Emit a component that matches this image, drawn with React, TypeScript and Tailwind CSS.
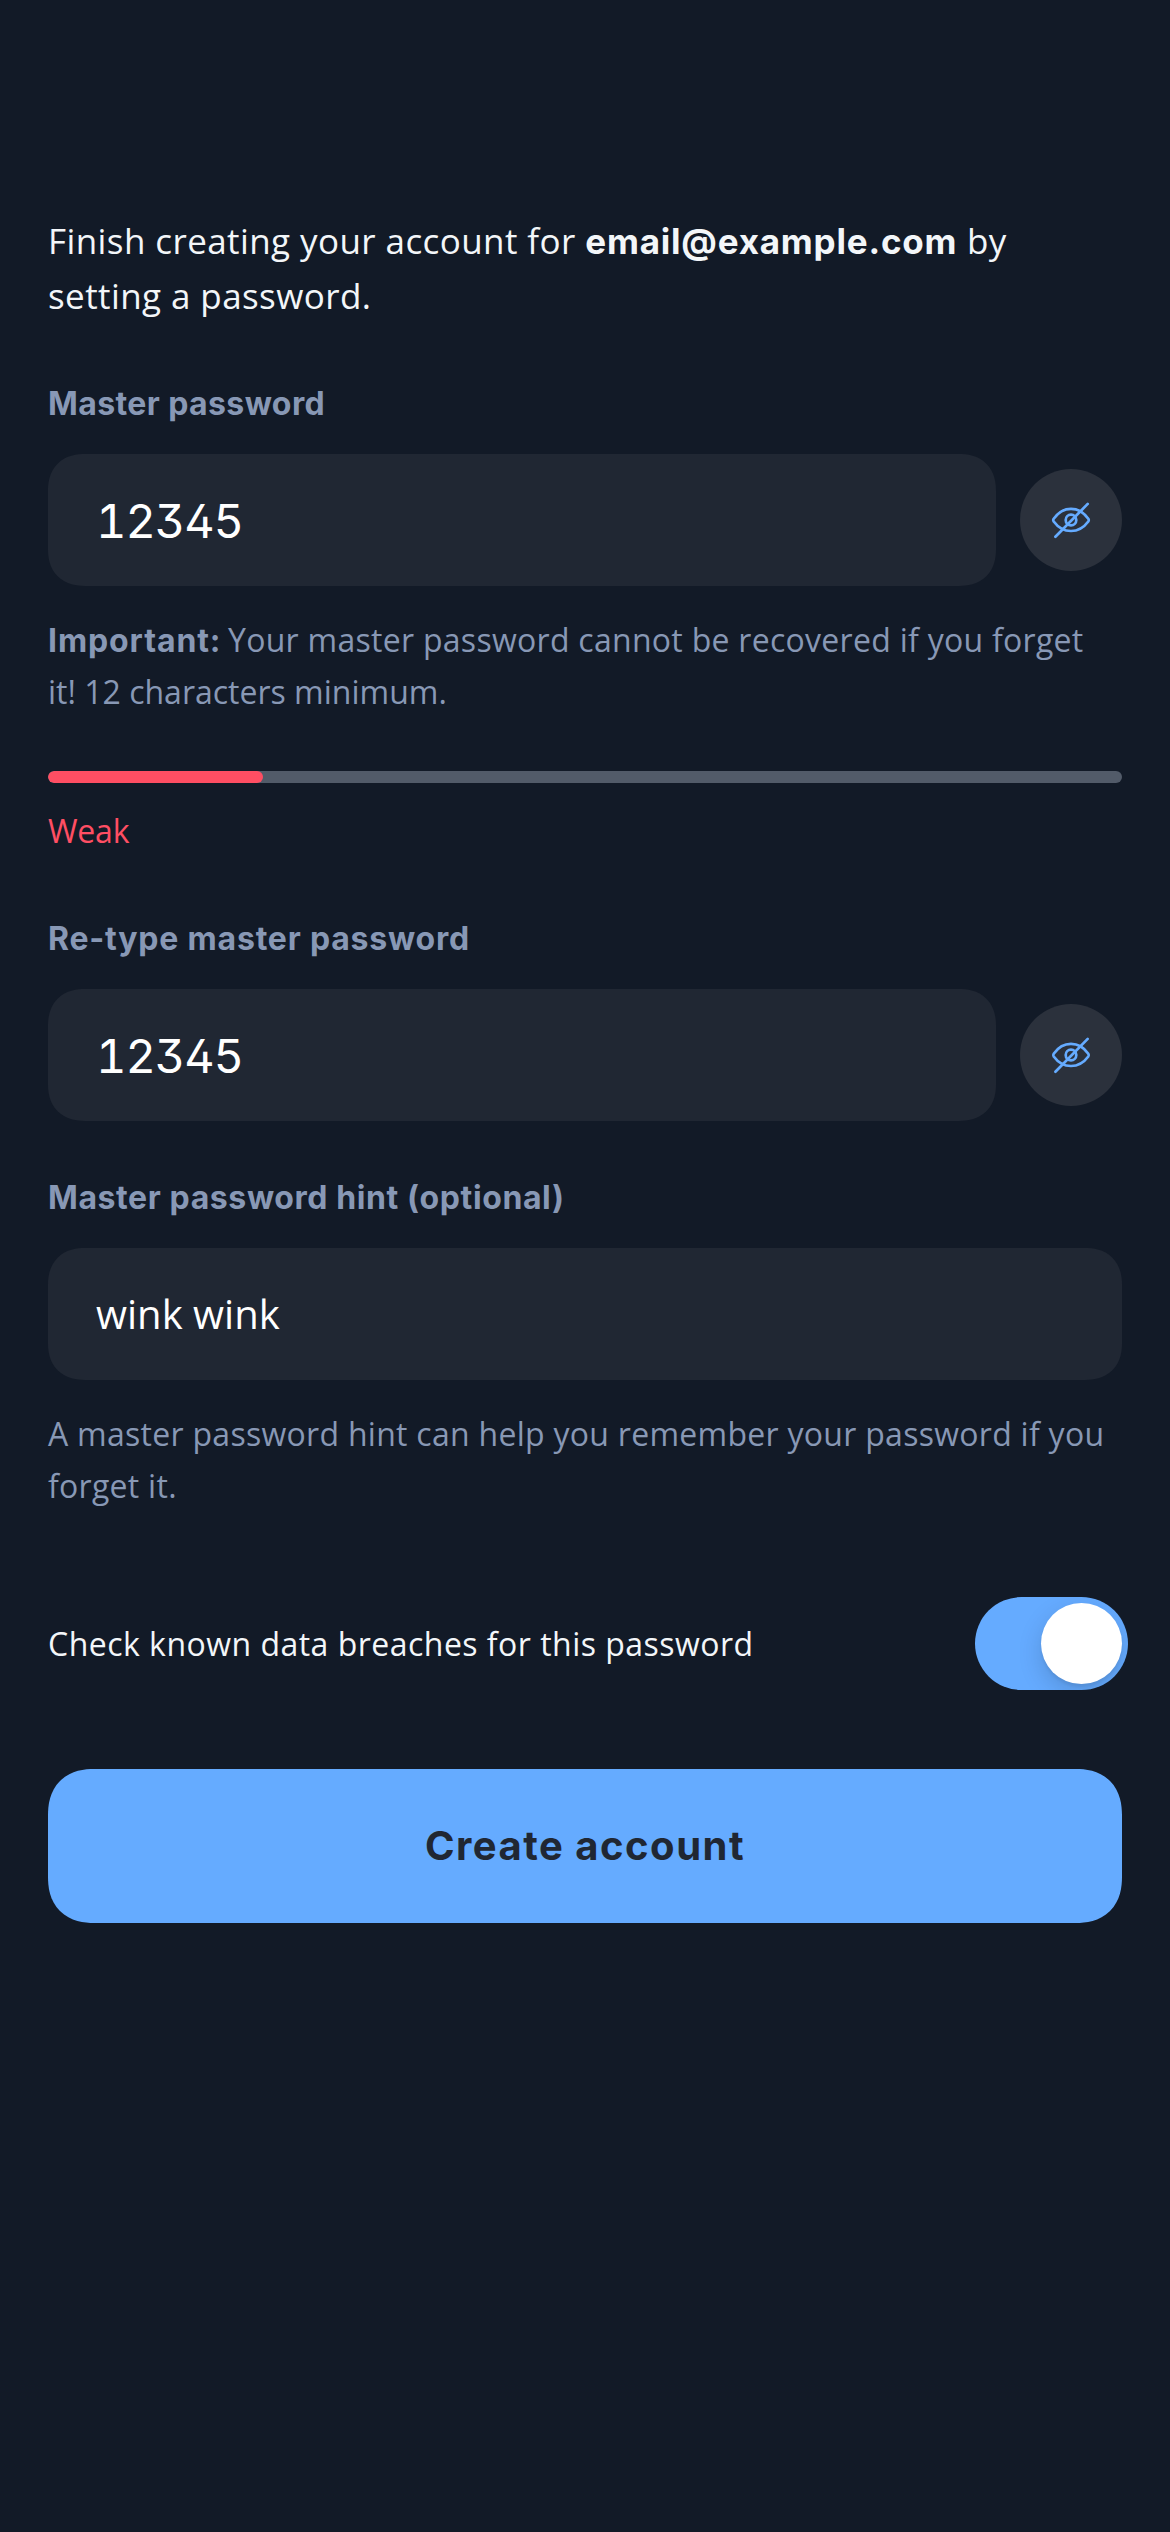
import type { ReactNode } from "react";

const fieldShape =
  "h-[132px] rounded-[32px] bg-[#202733] supports-[corner-shape:squircle]:rounded-[37px] supports-[corner-shape:squircle]:[corner-shape:superellipse(1.2)]";

function Label({ children, className }: { children: ReactNode; className: string }) {
  return (
    <label className={`block font-['Inter',sans-serif] text-[32px] leading-10 font-bold text-[#8898b5] ${className}`}>
      {children}
    </label>
  );
}

function EyeSlashIcon() {
  return (
    <svg viewBox="0 0 42 42" className="size-[42px]" fill="none" stroke="#65abff" strokeWidth="2.7" strokeLinecap="round" strokeLinejoin="round">
      <path d="M3.7 19.7C8.3 13.3 14.1 9.9 21 9.9s12.7 3.4 17.3 9.8c.6.9.6 1.9 0 2.8C33.7 28.7 27.9 32 21 32S8.3 28.7 3.7 22.5c-.6-.9-.6-1.9 0-2.8Z" />
      <circle cx="21" cy="21" r="5.3" />
      <path d="M5.4 37.8 37.7 4.9" />
    </svg>
  );
}

function PasswordField({ value }: { value: string }) {
  return (
    <div className="mt-[30px] flex items-center gap-6">
      <div className={`flex flex-1 items-center pl-12 ${fieldShape}`}>
        <span className="font-['Inter',sans-serif] text-[47px] leading-none tracking-[-1.1px] text-white [font-feature-settings:'tnum','ss01']">
          {value}
        </span>
      </div>
      <button className="flex size-[102px] items-center justify-center rounded-full bg-[#2b313c]" aria-label="Toggle visibility">
        <EyeSlashIcon />
      </button>
    </div>
  );
}

export default function App() {
  return (
    <main className="flex min-h-[2532px] w-[1170px] flex-col bg-[#121a27] px-12 pt-[213px] font-['Open_Sans',sans-serif]">
      <p className="text-[35px] leading-[55px] text-[#f3f6f9]">
        <span className="tracking-[0.41px]">Finish creating your account for </span>
        <strong className="font-['Inter',sans-serif] leading-[0] font-bold tracking-[0.81px]">email@example.com</strong>
        <span className="tracking-[0.41px]"> by</span>
        <br />
        <span className="tracking-[0.41px]">setting a password.</span>
      </p>

      <Label className="mt-[61px] tracking-[0.4px]">Master password</Label>
      <PasswordField value="12345" />
      <p className="mt-[28px] text-[32px] leading-[52px] text-[#8898b5]">
        <strong className="font-['Inter',sans-serif] leading-[0] font-bold tracking-[0.9px]">Important:</strong>
        <span className="-ml-[2px] tracking-[0.28px]"> Your master password cannot be recovered if you forget</span>
        <br />
        it! 12 characters minimum.
      </p>

      <div className="mt-[53px] h-3 overflow-hidden rounded-full bg-[#525b69]">
        <div className="h-full w-1/5 rounded-full bg-[#ff4e63]" />
      </div>
      <p className="mt-[22px] text-[32px] leading-[52px] tracking-[-0.2px] text-[#ff4e63]">Weak</p>

      <Label className="mt-[62px] tracking-[0.8px]">Re-type master password</Label>
      <PasswordField value="12345" />

      <Label className="mt-[57px] tracking-[0.6px]">Master password hint (optional)</Label>
      <div className={`mt-[30px] flex items-center pl-12 ${fieldShape}`}>
        <span className="text-[40px] leading-none text-white">wink wink</span>
      </div>
      <p className="mt-[28px] text-[32px] leading-[52px] tracking-[0.28px] text-[#8898b5]">
        A master password hint can help you remember your password if you
        <br />
        forget it.
      </p>

      <div className="mt-[85px] -mr-[6px] flex h-[93px] items-center justify-between">
        <span className="text-[32px] leading-[52px] tracking-[0.48px] text-[#f3f6f9]">
          Check known data breaches for this password
        </span>
        <div className="flex h-[93px] w-[153px] items-center justify-end overflow-hidden rounded-full bg-[#65abff] pr-[6px]">
          <div className="size-[81px] rounded-full bg-white shadow-[0_9px_24px_rgba(0,0,0,0.15),0_3px_3px_rgba(0,0,0,0.06)]" />
        </div>
      </div>

      <button className="mt-[79px] flex h-[154px] items-center justify-center rounded-[40px] bg-[#65abff] pb-px font-['Inter',sans-serif] text-[40px] leading-[50px] font-bold tracking-[1.5px] text-[#202733] supports-[corner-shape:squircle]:rounded-[46px] supports-[corner-shape:squircle]:[corner-shape:superellipse(1.2)]">
        Create account
      </button>
    </main>
  );
}
